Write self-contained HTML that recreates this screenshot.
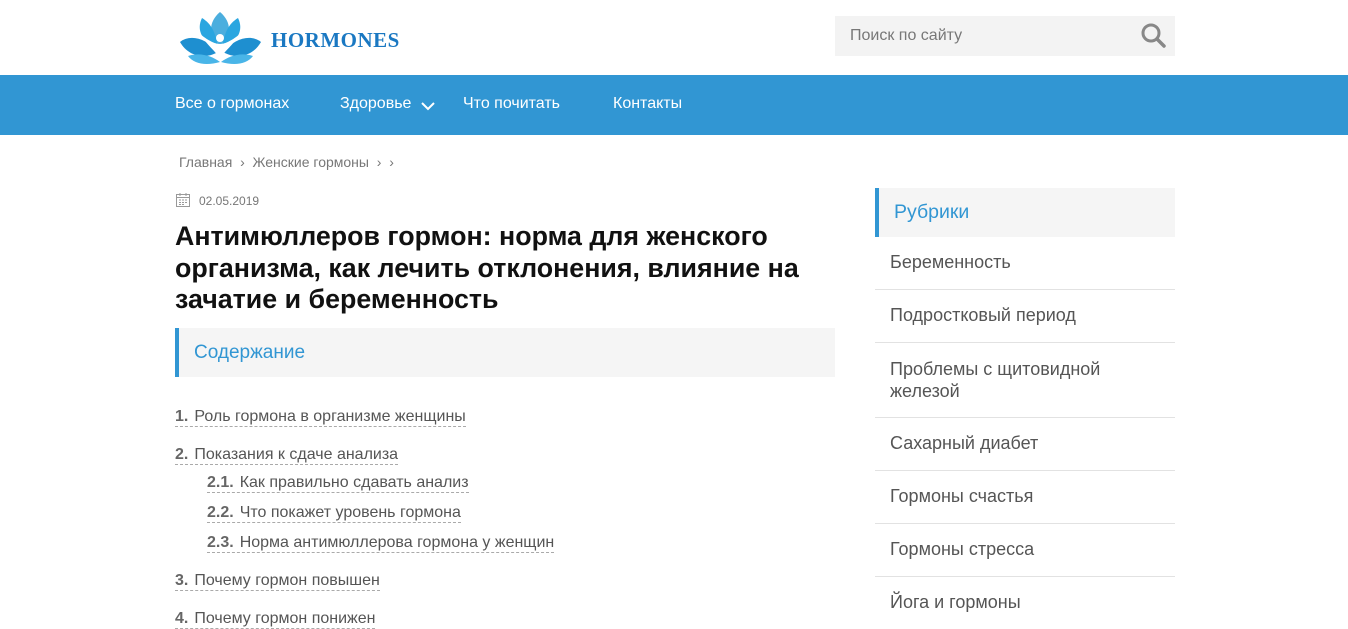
<!DOCTYPE html>
<html><head><meta charset="utf-8"><style>
*{margin:0;padding:0;box-sizing:border-box}
body{width:1348px;height:628px;overflow:hidden;background:#fff;font-family:"Liberation Sans",sans-serif;color:#333}
.abs{position:absolute}
.nav{left:0;top:75px;width:1348px;height:60px;background:#3196d3}
.nav span{position:absolute;top:20px;color:#fff;font-size:16px}
.toc a{position:absolute;font-size:16px;color:#555;border-bottom:1px dashed #aaa;line-height:19px;white-space:nowrap}
.toc b{color:#666;margin-right:6px}
.side div{position:absolute;left:875px;width:300px;font-size:18px;color:#555;padding-left:15px}
.sep{position:absolute;left:875px;width:300px;height:1px;background:#e2e2e2}
</style></head><body>
<svg class="abs" style="left:178px;top:12px" width="85" height="52" viewBox="0 0 85 52">
<path d="M42 0 C30 10 30 25 42 34 C54 25 54 10 42 0Z" fill="#1e9ad6" opacity=".8"/>
<path d="M24 6 C18 18 24 30 40 36 C38 22 34 12 24 6Z" fill="#2aa6e0"/>
<path d="M60 6 C66 18 60 30 44 36 C46 22 50 12 60 6Z" fill="#2aa6e0"/>
<path d="M2 30 C12 22 28 26 40 40 C26 48 10 44 2 30Z" fill="#1e8fd0"/>
<path d="M83 30 C73 22 57 26 45 40 C59 48 75 44 83 30Z" fill="#1e8fd0"/>
<path d="M10 44 C22 40 34 44 42 50 C28 54 16 52 10 44Z" fill="#49b5e8"/>
<path d="M75 44 C63 40 51 44 43 50 C57 54 69 52 75 44Z" fill="#49b5e8"/>
<path d="M22 22 C32 30 38 32 42 32 C46 32 52 30 62 22 C54 34 48 38 42 46 C36 38 30 34 22 22Z" fill="#fff"/>
<circle cx="42" cy="26" r="4" fill="#fff"/>
</svg>
<div class="abs" style="left:271px;top:28px;font-family:'Liberation Serif',serif;font-weight:bold;font-size:21px;color:#1a78c2;letter-spacing:.5px">HORMONES</div>
<div class="abs" style="left:835px;top:16px;width:340px;height:40px;background:#f3f3f3"></div>
<div class="abs" style="left:850px;top:27px;font-size:16px;color:#777">Поиск по сайту</div>
<svg class="abs" style="left:1140px;top:22px" width="26" height="26" viewBox="0 0 26 26"><circle cx="11" cy="11" r="8" fill="none" stroke="#888" stroke-width="3"/><path d="M17 17 L24 24" stroke="#888" stroke-width="3.5" stroke-linecap="round"/></svg>
<div class="abs nav">
<span style="left:175px">Все о гормонах</span>
<span style="left:340px">Здоровье</span>
<svg class="abs" style="left:421px;top:27px" width="14" height="9"><path d="M1 1 L7 7 L13 1" stroke="#fff" stroke-width="2" fill="none"/></svg>
<span style="left:463px">Что почитать</span>
<span style="left:613px">Контакты</span>
</div>
<div class="abs" style="left:179px;top:154px;font-size:14px;color:#777">Главная &nbsp;›&nbsp; Женские гормоны &nbsp;› &nbsp;›</div>
<svg class="abs" style="left:175px;top:192px" width="16" height="16" viewBox="0 0 16 16"><rect x="1.5" y="2.5" width="13" height="12" fill="none" stroke="#999"/><path d="M1.5 5.5H14.5M5 1V4M11 1V4" stroke="#999"/><path d="M4 8h2M7 8h2M10 8h2M4 10.5h2M7 10.5h2M10 10.5h2M4 12.5h2M7 12.5h2" stroke="#999"/></svg>
<div class="abs" style="left:199px;top:194px;font-size:12px;color:#777">02.05.2019</div>
<div class="abs" style="left:175px;top:221px;width:660px;font-size:26.8px;font-weight:bold;line-height:31.5px;color:#111">Антимюллеров гормон: норма для женского организма, как лечить отклонения, влияние на зачатие и беременность</div>
<div class="abs" style="left:175px;top:328px;width:660px;height:49px;background:#f5f5f5;border-left:4px solid #3196d3"></div>
<div class="abs" style="left:194px;top:342px;font-size:19px;color:#3196d3">Содержание</div>
<div class="toc">
<a style="left:175px;top:407px"><b>1.</b>Роль гормона в организме женщины</a>
<a style="left:175px;top:445px"><b>2.</b>Показания к сдаче анализа</a>
<a style="left:207px;top:473px"><b>2.1.</b>Как правильно сдавать анализ</a>
<a style="left:207px;top:503px"><b>2.2.</b>Что покажет уровень гормона</a>
<a style="left:207px;top:533px"><b>2.3.</b>Норма антимюллерова гормона у женщин</a>
<a style="left:175px;top:571px"><b>3.</b>Почему гормон повышен</a>
<a style="left:175px;top:609px"><b>4.</b>Почему гормон понижен</a>
</div>
<div class="abs" style="left:875px;top:188px;width:300px;height:49px;background:#f5f5f5;border-left:4px solid #3196d3"></div>
<div class="abs" style="left:894px;top:201px;font-size:19.5px;color:#3196d3">Рубрики</div>
<div class="side">
<div style="top:252px">Беременность</div>
<div style="top:305px">Подростковый период</div>
<div style="top:358px;line-height:22px">Проблемы с щитовидной<br>железой</div>
<div style="top:433px">Сахарный диабет</div>
<div style="top:486px">Гормоны счастья</div>
<div style="top:539px">Гормоны стресса</div>
<div style="top:592px">Йога и гормоны</div>
</div>
<div class="sep" style="top:289px"></div><div class="sep" style="top:342px"></div><div class="sep" style="top:417px"></div><div class="sep" style="top:470px"></div><div class="sep" style="top:523px"></div><div class="sep" style="top:576px"></div>
</body></html>
